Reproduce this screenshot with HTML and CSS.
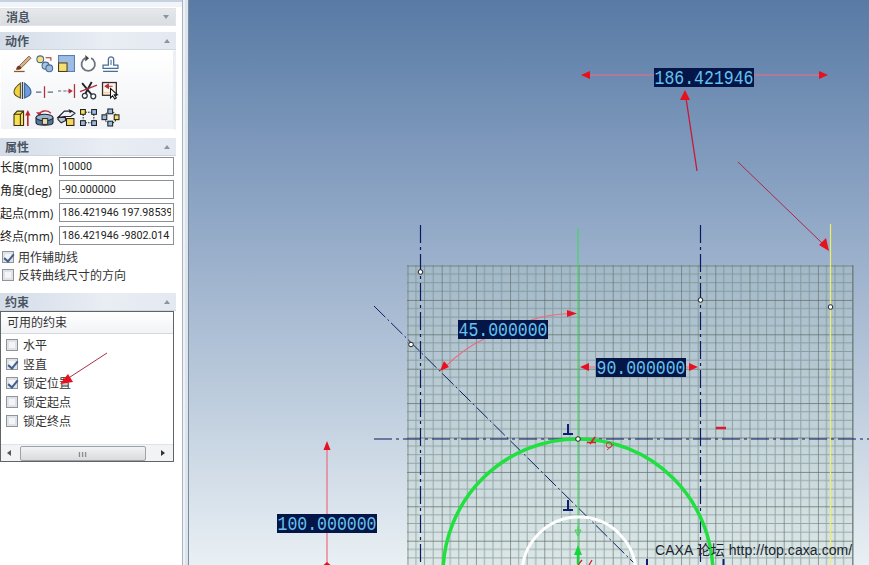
FILE: index.html
```html
<!DOCTYPE html>
<html lang="zh">
<head>
<meta charset="utf-8">
<title>CAXA</title>
<link rel="stylesheet" href="styles.css">
</head>
<body>
<div class="app">
  <aside class="side">
    <section class="panel collapsed">
      <header class="head"><span>消息</span><i class="chev down"></i></header>
    </section>
    <section class="panel panel-actions">
      <header class="head"><span>动作</span><i class="chev"></i></header>
      <div class="tools">
        <div class="tool-row">
          <svg class="ico" viewBox="0 0 16 16"><path d="M0 15.500h10" stroke="#8a5a20" stroke-width="1.200"/><path d="M5 10 14 1l2 2-9 9z" fill="#d8ae84" stroke="#7a5a40" stroke-width=".8"/><path d="M2 14c0-2 1-4 3-4l2 2c0 2-3 2-5 2z" fill="#6a3a20"/></svg>
          <svg class="ico" viewBox="0 0 16 16"><circle cx="4" cy="4" r="3.200" fill="#f6e27a" stroke="#4a6a90"/><circle cx="9" cy="10" r="3.300" fill="#a9c4e6" stroke="#4a6a90"/><circle cx="12.500" cy="12.500" r="3.200" fill="#9dbbe0" stroke="#4a6a90"/><path d="M9 2.500h5v3" fill="none" stroke="#a03030"/></svg>
          <svg class="ico" viewBox="0 0 16 16"><rect x=".5" y=".5" width="15" height="15" fill="#9fbde4" stroke="#5a80b0"/><rect x=".5" y="7.500" width="8" height="8" fill="#f8e070" stroke="#4a4020"/></svg>
          <svg class="ico" viewBox="0 0 16 16"><path d="M10.500 3A6.300 6.300 0 1 1 5 3" fill="none" stroke="#6a7580" stroke-width="1.700"/><path d="M5 0l3.500 3L5 6z" fill="#444"/></svg>
          <svg class="ico" viewBox="0 0 16 16"><path d="M1 15.500h14M1 12.500h14V9.500h-4V4C11 1 6 1 6 4v5.500H1z" fill="#fff" stroke="#4a6f96" stroke-width="1.200"/><path d="M8.500 9.500V4.500" fill="none" stroke="#4a6f96"/></svg>
        </div>
        <div class="tool-row">
          <svg class="ico" viewBox="0 0 16 16"><path d="M6 1C2 4 0 7 0 9.500S3 14 6 15z" fill="#f3d440" stroke="#5a5020"/><path d="M10 1c4 3 6 6 6 8.500S13 14 10 15z" fill="#6d9ddc" stroke="#3a5f90"/><path d="M8 0v16" stroke="#345" stroke-width="1.300"/></svg>
          <svg class="ico" viewBox="0 0 16 16"><path d="M0 9.500h5M11 9.500h5" stroke="#5a6a80"/><path d="M8 4v11" stroke="#b03040" stroke-width="1.200"/></svg>
          <svg class="ico" viewBox="0 0 16 16"><path d="M0 8.500h3M5 8.500h3" stroke="#5a6a80"/><path d="M9 8.500h3" stroke="#b03040"/><path d="M10 6l4 2.500-4 2.500z" fill="#b03040"/><path d="M15.500 2v13" stroke="#b03040" stroke-width="1.200"/></svg>
          <svg class="ico" viewBox="0 0 16 16"><path d="M2 1 11 12M11 0 5 11" stroke="#20252a" stroke-width="1.800"/><path d="M0 9 16 3" stroke="#b03040" stroke-width="1.200"/><circle cx="4.500" cy="13" r="2.300" fill="#fff" stroke="#303a44" stroke-width="1.200"/><circle cx="12.500" cy="13.500" r="2.300" fill="#fff" stroke="#303a44" stroke-width="1.200"/></svg>
          <svg class="ico" viewBox="0 0 16 16"><rect x=".5" y=".5" width="13" height="12" fill="#fdf5ea" stroke="#3a2a2a" stroke-width="1.200"/><path d="M1 10h6" stroke="#f0d070"/><path d="M3 4h7M3 4l3-2v4z" fill="#b03040" stroke="#b03040"/><path d="M8 6v9l2-2 2 3 1.500-1-2-3h3z" fill="#fff" stroke="#111"/></svg>
        </div>
        <div class="tool-row">
          <svg class="ico" viewBox="0 0 16 16"><path d="M0 5l3-3h6v13.500H0z" fill="#f6df50" stroke="#3a3010"/><path d="M0 5h6v10.500M6 5l3-3" fill="none" stroke="#3a3010"/><path d="M13 16V4" stroke="#c02030" stroke-width="1.500"/><path d="M10.500 6 13 1l2.500 5z" fill="#c02030"/></svg>
          <svg class="ico" viewBox="0 0 16 16"><path d="M3 5C5 1 11 1 14 4" fill="none" stroke="#c03040" stroke-width="1.200"/><path d="M0 3l3.500 4L5 3z" fill="#c03040"/><path d="M0 8v5c0 3 16 3 16 0V8" fill="#54789c" stroke="#223"/><ellipse cx="8" cy="8" rx="8" ry="3" fill="#9ab6cc" stroke="#223"/><rect x="6" y="9" width="5" height="5.500" fill="#e8e0b0" stroke="#333"/></svg>
          <svg class="ico" viewBox="0 0 16 16"><path d="M0 8 6 2h7l3 2-4 3H6z" fill="#eef2f6" stroke="#223"/><path d="M0 8v2l3 3 4-2V8z" fill="#bcc8d4" stroke="#223"/><path d="M10 0l4 2-3 2z" fill="#223"/><rect x="8" y="9" width="7" height="6.500" fill="#f5d850" stroke="#222"/></svg>
          <svg class="ico" viewBox="0 0 16 16"><path d="M5 3h6M5 13h6M3 5v6M13 5v6" stroke="#233" stroke-dasharray="1.500 1"/><rect x=".5" y=".5" width="4.500" height="4.500" fill="#f6df50" stroke="#222"/><rect x="11" y=".5" width="4.500" height="4.500" fill="#9dbbe0" stroke="#222"/><rect x=".5" y="11" width="4.500" height="4.500" fill="#9dbbe0" stroke="#222"/><rect x="11" y="11" width="4.500" height="4.500" fill="#9dbbe0" stroke="#222"/></svg>
          <svg class="ico" viewBox="0 0 16 16"><circle cx="8" cy="8" r="5.500" fill="none" stroke="#233" stroke-dasharray="1.500 1"/><rect x="5.500" y="0" width="4.500" height="4.500" fill="#9dbbe0" stroke="#222"/><rect x="11.500" y="5.500" width="4.500" height="4.500" fill="#f6df50" stroke="#222"/><rect x="0" y="5.500" width="4.500" height="4.500" fill="#9dbbe0" stroke="#222"/><rect x="5.500" y="11.500" width="4.500" height="4.500" fill="#9dbbe0" stroke="#222"/></svg>
        </div>
      </div>
    </section>
    <section class="panel panel-props">
      <header class="head"><span>属性</span><i class="chev"></i></header>
      <div class="props">
        <label class="prop"><span>长度(mm)</span><input class="field" value="10000"></label>
        <label class="prop"><span>角度(deg)</span><input class="field" value="-90.000000"></label>
        <label class="prop"><span>起点(mm)</span><input class="field" value="186.421946 197.98539"></label>
        <label class="prop"><span>终点(mm)</span><input class="field" value="186.421946 -9802.014"></label>
        <div class="check"><i class="box on"></i>用作辅助线</div>
        <div class="check"><i class="box"></i>反转曲线尺寸的方向</div>
      </div>
    </section>
    <section class="panel panel-cons">
      <header class="head"><span>约束</span><i class="chev"></i></header>
      <div class="cons">
        <div class="cons-title">可用的约束</div>
        <div class="cons-list">
          <div class="check"><i class="box"></i>水平</div>
          <div class="check"><i class="box on"></i>竖直</div>
          <div class="check"><i class="box on"></i>锁定位置</div>
          <div class="check"><i class="box"></i>锁定起点</div>
          <div class="check"><i class="box"></i>锁定终点</div>
        </div>
        <div class="hscroll">
          <i class="tri left"></i>
          <div class="thumb">III</div>
          <i class="tri right"></i>
        </div>
      </div>
    </section>
    <svg class="side-arrow" viewBox="0 0 60 40"><path d="M48 3 8 29" stroke="#a83040" stroke-width="1" fill="none"/><path d="M1 34 9 24 14 32z" fill="#e8101c"/></svg>
  </aside>
  <div class="splitter"></div>
  <main class="canvas">
    <svg class="scene" viewBox="189 0 680 565">
      <defs>
        <pattern id="grid" x="407.500" y="265.500" width="34.200" height="34.400" patternUnits="userSpaceOnUse">
          <path d="M8.550 0V34.400M17.100 0V34.400M25.650 0V34.400M0 8.600H34.200M0 17.200H34.200M0 25.800H34.200" stroke="#6d8480" stroke-width="1" opacity=".6" fill="none"/>
          <path d="M0 0V34.400M0 0H34.200" stroke="#5f6e68" stroke-width="1.300" fill="none"/>
        </pattern>
      </defs>
      <rect class="grid-tint" x="407" y="265" width="446" height="300"/>
      <rect x="407" y="265" width="446" height="300" fill="url(#grid)"/>
      <path d="M853 265V565" stroke="#6d7d7a"/>

      <path class="thin-green" d="M578 228V565"/>
      <path class="yellow" d="M830.500 224V565"/>
      <path class="axis" d="M420.500 225V565M700.500 225V565"/>
      <path class="axis" d="M374 439H869"/>
      <path class="diag" d="M374 306 636 565"/>

      <circle class="big-green" cx="578" cy="574" r="135"/>
      <circle class="big-white" cx="579" cy="574" r="57"/>

      <path class="navy-sym" d="M568 424V433M563 434H573M568 500V509M563 510H573M647 559V565M723.500 559V565"/>
      <path class="red-sym" d="M716 428H726" stroke-width="2.500"/>
      <path class="red-sym" d="M587 442.500H596M590 444 595 437" stroke-width="1.700"/>
      <circle cx="609" cy="445" r="2.800" fill="none" stroke="#c84040"/>
      <path d="M607 450 614 444" stroke="#c84040" fill="none"/>
      <path class="red-sym" d="M578 565 582 560M589 565 592 560" stroke-width="1.300"/>
      <path d="M575 530 581 530 578 536zM578 526V532" stroke="#3ecf55" fill="none"/>
      <path d="M574 555 578 545 582 555z" fill="#12d83a"/>
      <path d="M578 552V564" stroke="#12d83a" stroke-width="2.500"/>

      <g class="dim-line">
        <path d="M590 75H654M754 75H820"/>
        <path d="M587 367H596M686 367H694"/>
        <path d="M327 449V514M327 533V565"/>
        <path d="M531 320C543 316 555 314 570 313.500"/>
        <path d="M484 339C467 347 455 357 445 367"/>
      </g>
      <g class="dim-head">
        <path d="M581 75 590 71V79z"/>
        <path d="M828 75 819 71V79z"/>
        <path d="M580 367 589 363V371z"/>
        <path d="M698 367 689 363V371z"/>
        <path d="M327 441 323.500 450H330.500z"/>
        <path d="M323.500 565 327 562 330.500 565z"/>
        <path d="M577 313.500 567 310V317z"/>
        <path d="M440 371 444 361 449 367z"/>
      </g>

      <path class="note-line" d="M697 171 686 98"/>
      <path class="note-head" d="M685 90 680 100 690 100z"/>
      <path class="note-line thin" d="M738 162 822 243"/>
      <path class="note-head" d="M829 251 819 245 826 238z"/>

      <g class="handles">
        <circle cx="420.500" cy="272" r="2.300"/>
        <circle cx="700.500" cy="300" r="2.300"/>
        <circle cx="830.500" cy="307" r="2.300"/>
        <circle cx="411" cy="344.500" r="2.300"/>
        <circle cx="578" cy="439" r="2.300"/>
      </g>

      <g>
        <rect class="dim-bg" x="654" y="68" width="100" height="19"/>
        <text class="dim-text" x="654.500" y="84" textLength="99" lengthAdjust="spacingAndGlyphs">186.421946</text>
        <rect class="dim-bg" x="458" y="320" width="90" height="19"/>
        <text class="dim-text" x="458.500" y="336" textLength="89" lengthAdjust="spacingAndGlyphs">45.000000</text>
        <rect class="dim-bg" x="596" y="358" width="90" height="19"/>
        <text class="dim-text" x="596.500" y="374" textLength="89" lengthAdjust="spacingAndGlyphs">90.000000</text>
        <rect class="dim-bg" x="277" y="514" width="100" height="19"/>
        <text class="dim-text" x="277.500" y="530" textLength="99" lengthAdjust="spacingAndGlyphs">100.000000</text>
      </g>
    </svg>
    <div class="watermark">CAXA 论坛 http://top.caxa.com/</div>
  </main>
</div>
</body>
</html>
```
FILE: styles.css
```css
* { box-sizing: border-box; }
html, body { margin: 0; height: 100%; overflow: hidden; }
body { font-family: "Open Sans", "Noto Sans CJK SC", sans-serif; font-size: 12px; color: #222; background: #fff; }
.app { display: flex; height: 565px; width: 869px; }

.side { position: relative; width: 182px; flex: none; background: #fff; padding: 6px 6px 0 0; border-top: 2px solid #c6d2e0; box-shadow: inset 0 5px 0 #f1f4f8; }
.panel { margin-bottom: 6px; background: #fff; }
.panel-props { margin-bottom: 8px; }
.head { height: 18px; display: flex; align-items: center; justify-content: space-between; padding: 0 6px 0 5px; background: linear-gradient(90deg, #d4dde8, #e9edf4 60%, #e4e9f1); border-bottom: 1px solid #cfd6de; font-size: 12px; font-weight: 700; color: #4b5563; }
.collapsed .head { background: linear-gradient(#e6e8ea, #d9dde1); border: 1px solid #e2e4e7; }
.chev { width: 0; height: 0; border: 3px solid transparent; border-bottom: 4px solid #8895a3; border-top: 0; }
.chev.down { border-top: 4px solid #8895a3; border-bottom: 0; }

.panel-actions { margin-bottom: 8px; }
.tools { height: 80px; padding: 4px 0 0 13px; display: flex; flex-direction: column; gap: 10px; background: linear-gradient(#fff, #f0f2f5); border: 1px solid #fff; border-right: 3px solid #eceff3; }
.tool-row { display: flex; gap: 5px; height: 17px; }
.ico { width: 17px; height: 17px; display: block; overflow: visible; }

.props { display: flex; flex-direction: column; gap: 4px; padding-top: 1px; height: 129px; }
.prop { display: flex; align-items: center; height: 19px; font-size: 12px; justify-content: space-between; white-space: nowrap; }
.prop span { overflow: hidden; width: 59px; margin-left: 0; }
.field { width: 115px; height: 19px; margin-right: 2px; padding: 0 2px; border: 1px solid #8c9198; font: 10.7px "Roboto", sans-serif; color: #222; background: #fff; outline: none; }
.check { display: flex; align-items: center; gap: 5px; height: 19px; font-size: 12px; color: #333; }
.props .check { gap: 4px; height: 14px; margin-top: 0; padding-left: 2px; }
.props .prop + .check { margin-top: 1px; }
.box { position: relative; flex: none; width: 12px; height: 12px; border: 1px solid #8f9499; box-shadow: inset 0 0 0 2px #dfe3e8; background: #f4f5f7; }
.box.on::after { content: ""; position: absolute; left: 3px; top: 0; width: 4px; height: 8px; border: solid #3f5f90; border-width: 0 2px 2px 0; transform: rotate(40deg); }

.panel-cons { margin-bottom: 0; }
.cons { height: 151px; width: 174px; border: 1px solid #5f6468; display: flex; flex-direction: column; background: #fff; }
.cons-title { height: 22px; line-height: 22px; padding-left: 6px; background: linear-gradient(#fff, #f1f3f6); border-bottom: 1px solid #d5d8dc; color: #333; font-size: 12px; }
.cons-list { flex: 1; padding-top: 1px; padding-left: 5px; }
.cons-list .check { height: 19.200px; }
.hscroll { height: 17px; display: flex; align-items: center; background: #f2f3f4; border-top: 1px solid #e0e2e4; padding: 0 3px; gap: 6px; }
.thumb { flex: 1; height: 15px; text-align: center; font-size: 8px; line-height: 14px; letter-spacing: 1px; color: #444; border: 1px solid #9ba2a8; border-radius: 2px; background: linear-gradient(#f2f3f4, #d9dbde); }
.tri { width: 0; height: 0; border: 3px solid transparent; }
.tri.left { border-right: 4px solid #555; border-left: 0; margin: 0 3px; }
.tri.right { border-left: 4px solid #333; border-right: 0; margin: 0 5px 0 9px; }
.side-arrow { position: absolute; left: 59px; top: 348px; width: 60px; height: 40px; overflow: visible; }

.splitter { width: 7px; flex: none; background: #dce4ee; border-left: 1px solid #a8b4c2; border-right: 1px solid #7f8c9c; box-shadow: inset 2px 0 0 #eef2f7; }
.canvas { position: relative; flex: 1; overflow: hidden; background: linear-gradient(#587aa5, #8ea6c5 210px, #c3d1e0 420px, #e9f0f4); }
.scene { display: block; width: 680px; height: 565px; }
.grid-tint { fill: #b8d0c0; opacity: .25; }
.thin-green { stroke: #2fe04f; stroke-width: 1; fill: none; }
.yellow { stroke: #efef66; stroke-width: 1.200; fill: none; }
.axis { stroke: #0a1a60; stroke-width: 1.200; fill: none; stroke-dasharray: 18 4 3 4; }
.diag { stroke: #0e2060; stroke-width: 1; fill: none; stroke-dasharray: 16 3 2 3; }
.big-green { fill: none; stroke: #1fe03f; stroke-width: 3.500; }
.big-white { fill: none; stroke: #fff; stroke-width: 3; }
.navy-sym { stroke: #0e1f70; stroke-width: 2; fill: none; }
.red-sym { stroke: #d81c30; fill: none; }
.dim-line { stroke: #ef6a80; stroke-width: 1.200; fill: none; }
.dim-head { fill: #e8101c; }
.note-line { stroke: #c8183a; stroke-width: 1.300; fill: none; }
.note-line.thin { stroke: #a82a48; stroke-width: 1; }
.note-head { fill: #e8101c; }
.handles circle { fill: #fff; stroke: #222; stroke-width: 1; }
.dim-bg { fill: #041647; }
.dim-text { font-family: "Liberation Mono", monospace; font-size: 20px; fill: #66c2ee; font-weight: 400; }
.watermark { position: absolute; left: 466px; top: 541px; font-family: "Liberation Sans", "Noto Sans CJK SC", sans-serif; font-size: 14px; letter-spacing: .07px; line-height: 18px; color: #1a2530; white-space: nowrap; }
```
